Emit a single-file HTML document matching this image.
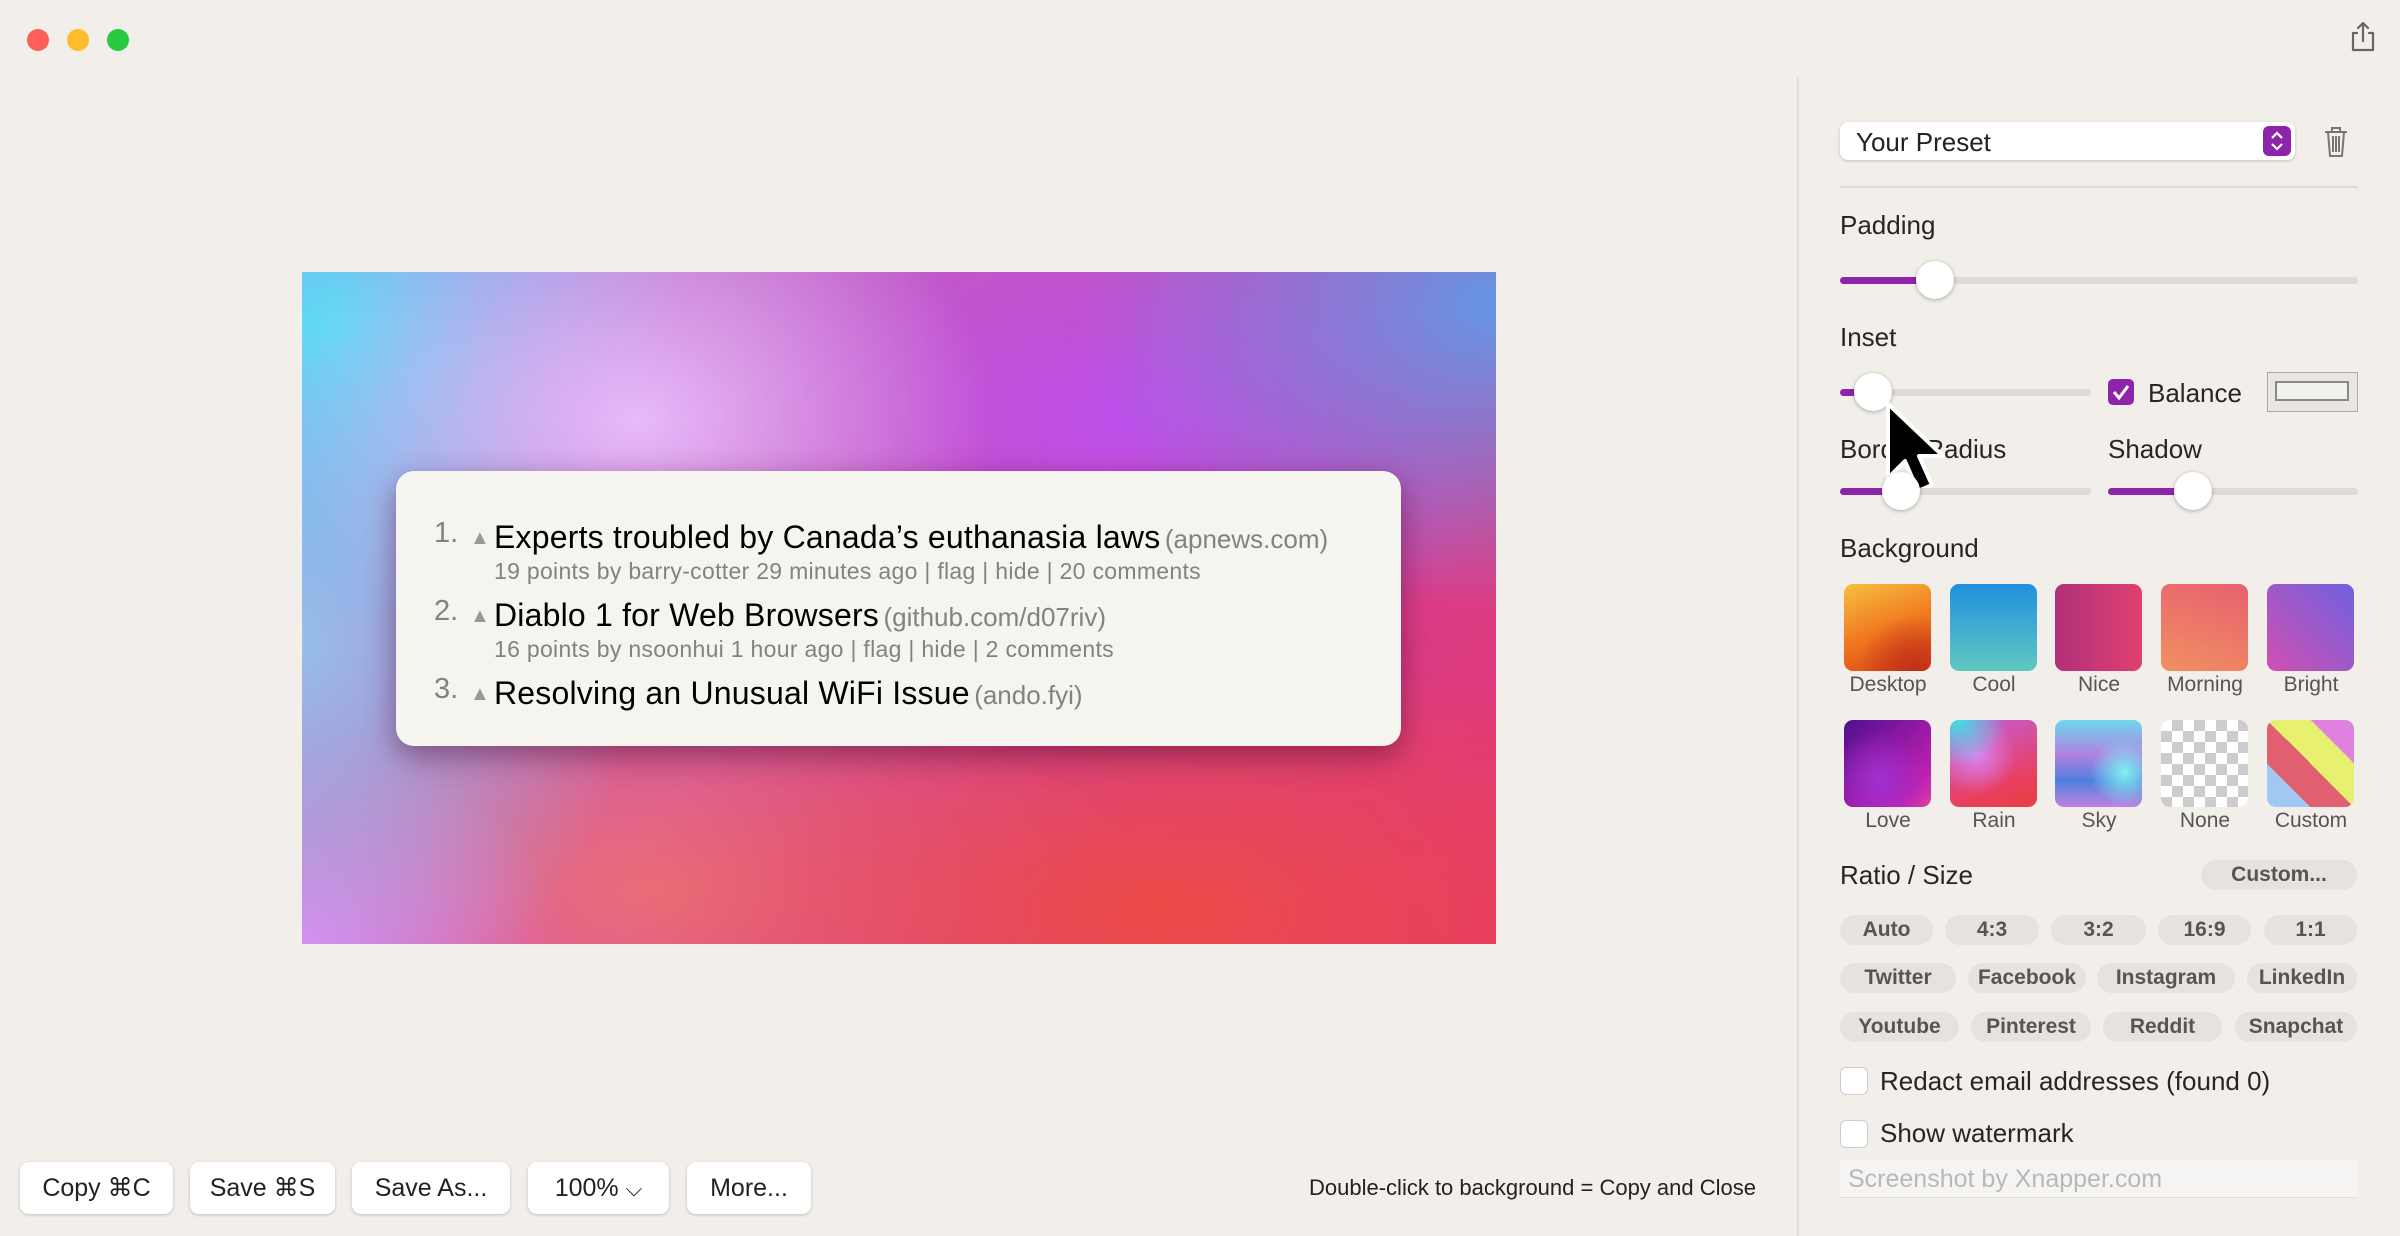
<!DOCTYPE html>
<html><head><meta charset="utf-8">
<style>
*{margin:0;padding:0;box-sizing:border-box}
html,body{width:2400px;height:1236px;overflow:hidden;background:#f2eeea;font-family:"Liberation Sans",sans-serif;color:#222}
.a{position:absolute}
.dot{position:absolute;top:29px;width:22px;height:22px;border-radius:50%}
.lbl{position:absolute;font-size:26px;color:#262626}
.track{position:absolute;height:7px;border-radius:4px;background:#dedad6}
.fill{position:absolute;left:0;top:0;height:7px;border-radius:4px;background:#8e24aa}
.knob{position:absolute;width:38px;height:38px;border-radius:50%;background:#fff;box-shadow:0 1px 4px rgba(0,0,0,.3);top:-16px}
.sw{position:absolute;width:87px;height:87px;border-radius:9px}
.swl{position:absolute;width:104px;text-align:center;font-size:21px;color:#555}
.pill{position:absolute;height:30px;border-radius:15px;background:#e6e2de;font-size:21px;font-weight:bold;color:#555;text-align:center;line-height:30px}
.cb{position:absolute;width:28px;height:28px;border-radius:6px;background:#fff;border:1px solid #ccc}
.btn{position:absolute;top:1162px;height:52px;background:#fff;border-radius:9px;box-shadow:0 1px 3px rgba(0,0,0,.2);font-size:25px;line-height:52px;text-align:center;color:#222}
.t{font-size:32px;color:#000;letter-spacing:0.2px}
.d{font-size:26px;color:#828282}
.s{font-size:23px;color:#828282;letter-spacing:0.3px}
.n{font-size:29px;color:#828282}
.tri{font-size:20px;color:#999}
</style></head><body>
<div class="dot" style="left:27px;background:#fe5f57"></div>
<div class="dot" style="left:67px;background:#febc2e"></div>
<div class="dot" style="left:107px;background:#28c840"></div>
<svg class="a" style="left:2348px;top:20px" width="30" height="34" viewBox="0 0 30 34"><path d="M9 13H5v17h20V13h-4M15 3v18M10 8l5-5 5 5" fill="none" stroke="#666" stroke-width="2.2" stroke-linecap="round" stroke-linejoin="round"/></svg>
<div class="a" style="left:1797px;top:77px;width:2px;height:1159px;background:#e2deda"></div>

<!-- canvas -->
<div class="a" style="left:302px;top:272px;width:1194px;height:672px;overflow:hidden;background:#d94a8a">
<div class="a" style="inset:0;background:
radial-gradient(ellipse 30% 40% at 28% 22%,rgba(232,185,250,1),rgba(232,185,250,0) 100%),
radial-gradient(ellipse 30% 45% at 2% 8%,rgba(90,220,245,1),rgba(90,220,245,0) 100%),
radial-gradient(ellipse 28% 60% at 0% 55%,rgba(150,190,235,1),rgba(150,190,235,0) 100%),
radial-gradient(ellipse 22% 30% at 0% 100%,rgba(230,130,240,1),rgba(230,130,240,0) 100%),
radial-gradient(ellipse 35% 45% at 100% 5%,rgba(100,150,230,1),rgba(100,150,230,0) 100%),
radial-gradient(ellipse 35% 40% at 68% 22%,rgba(190,80,235,1),rgba(190,80,235,0) 100%),
radial-gradient(ellipse 45% 40% at 72% 95%,rgba(235,75,70,1),rgba(235,75,70,0) 100%),
radial-gradient(ellipse 40% 40% at 30% 92%,rgba(235,110,120,1),rgba(235,110,120,0) 100%),
linear-gradient(135deg,#b080e0,#d040a0 60%,#e8386a)"></div>
</div>
<div class="a" style="left:396px;top:471px;width:1005px;height:275px;border-radius:18px;background:#f5f4ee;box-shadow:0 10px 30px rgba(60,0,30,.45)">
 <div class="a n" style="left:38px;top:46px">1.</div><div class="a tri" style="left:74px;top:56px">▲</div>
 <div class="a" style="left:98px;top:48px;white-space:nowrap"><span class="t">Experts troubled by Canada’s euthanasia laws</span> <span class="d">(apnews.com)</span></div>
 <div class="a s" style="left:98px;top:87px;white-space:nowrap">19 points by barry-cotter 29 minutes ago | flag | hide | 20 comments</div>
 <div class="a n" style="left:38px;top:124px">2.</div><div class="a tri" style="left:74px;top:134px">▲</div>
 <div class="a" style="left:98px;top:126px;white-space:nowrap"><span class="t">Diablo 1 for Web Browsers</span> <span class="d">(github.com/d07riv)</span></div>
 <div class="a s" style="left:98px;top:165px;white-space:nowrap">16 points by nsoonhui 1 hour ago | flag | hide | 2 comments</div>
 <div class="a n" style="left:38px;top:202px">3.</div><div class="a tri" style="left:74px;top:212px">▲</div>
 <div class="a" style="left:98px;top:204px;white-space:nowrap"><span class="t">Resolving an Unusual WiFi Issue</span> <span class="d">(ando.fyi)</span></div>
</div>

<!-- bottom -->
<div class="btn" style="left:20px;width:153px">Copy ⌘C</div>
<div class="btn" style="left:190px;width:145px">Save ⌘S</div>
<div class="btn" style="left:352px;width:158px">Save As...</div>
<div class="btn" style="left:528px;width:141px">100% <span style="font-size:22px">⌵</span></div>
<div class="btn" style="left:687px;width:124px">More...</div>
<div class="a" style="left:1200px;width:556px;text-align:right;top:1175px;font-size:22px;color:#222">Double-click to background = Copy and Close</div>

<!-- sidebar -->
<div class="a" style="left:1840px;top:122px;width:455px;height:38px;background:#fff;border-radius:8px;box-shadow:0 1px 3px rgba(0,0,0,.2)">
 <div class="a" style="left:16px;top:5px;font-size:26px">Your Preset</div>
 <div class="a" style="right:4px;top:4px;width:28px;height:30px;border-radius:6px;background:#8e24aa">
  <svg width="28" height="30" viewBox="0 0 28 30"><path d="M9 12l5-5 5 5M9 18l5 5 5-5" fill="none" stroke="#fff" stroke-width="2.2"/></svg></div>
</div>
<svg class="a" style="left:2322px;top:125px" width="28" height="34" viewBox="0 0 28 34"><path d="M3 7h22M10 7V3h8v4M6 7l2 24h12l2-24M11 11v16M14 11v16M17 11v16" fill="none" stroke="#777" stroke-width="2"/></svg>
<div class="a" style="left:1840px;top:186px;width:518px;height:2px;background:#dedad6"></div>

<div class="lbl" style="left:1840px;top:210px">Padding</div>
<div class="track" style="left:1840px;top:277px;width:518px"><div class="fill" style="width:95px"></div><div class="knob" style="left:76px"></div></div>
<div class="lbl" style="left:1840px;top:322px">Inset</div>
<div class="track" style="left:1840px;top:389px;width:251px"><div class="fill" style="width:33px"></div><div class="knob" style="left:14px"></div></div>
<div class="a" style="left:2108px;top:379px;width:26px;height:26px;border-radius:5px;background:#8e24aa"><svg width="26" height="26" viewBox="0 0 26 26"><path d="M6 13l5 6 9-12" fill="none" stroke="#fff" stroke-width="3"/></svg></div>
<div class="lbl" style="left:2148px;top:378px">Balance</div>
<div class="a" style="left:2267px;top:372px;width:91px;height:40px;border:1px solid #aaa;background:#e8e5e2"><div class="a" style="left:7px;top:8px;width:74px;height:20px;border:2px solid #888;background:#f3f1ee"></div></div>
<div class="lbl" style="left:1840px;top:434px">Border Radius</div>
<div class="lbl" style="left:2108px;top:434px">Shadow</div>
<!-- cursor -->
<svg class="a" style="left:1884px;top:400px" width="64" height="96" viewBox="0 0 64 96"><path d="M4 4v74l17-17 13 30 14-6-13-29h24z" fill="#000" stroke="#fff" stroke-width="4" stroke-linejoin="round"/></svg>
<div class="track" style="left:1840px;top:488px;width:251px"><div class="fill" style="width:62px"></div><div class="knob" style="left:42px"></div></div>
<div class="track" style="left:2108px;top:488px;width:250px"><div class="fill" style="width:85px"></div><div class="knob" style="left:66px"></div></div>

<div class="lbl" style="left:1840px;top:533px">Background</div>
<div class="sw" style="left:1844px;top:584px;background:radial-gradient(circle at 80% 100%,#c0301a,transparent 50%),linear-gradient(160deg,#f8c040,#f07a20 50%,#d84010)"></div>
<div class="sw" style="left:1950px;top:584px;background:linear-gradient(180deg,#2090e0,#60c8c0)"></div>
<div class="sw" style="left:2055px;top:584px;background:linear-gradient(90deg,#b0307a,#e04070)"></div>
<div class="sw" style="left:2161px;top:584px;background:linear-gradient(20deg,#f09060,#e86070)"></div>
<div class="sw" style="left:2267px;top:584px;background:linear-gradient(45deg,#d050b0,#7060e0)"></div>
<div class="swl" style="left:1836px;top:673px">Desktop</div><div class="swl" style="left:1942px;top:673px">Cool</div><div class="swl" style="left:2047px;top:673px">Nice</div><div class="swl" style="left:2153px;top:673px">Morning</div><div class="swl" style="left:2259px;top:673px">Bright</div>
<div class="sw" style="left:1844px;top:720px;background:radial-gradient(circle at 40% 70%,#a030d0,transparent 60%),linear-gradient(135deg,#501090,#c020b0 80%,#e040a0)"></div>
<div class="sw" style="left:1950px;top:720px;background:radial-gradient(circle at 10% 0%,#40e0e0,transparent 40%),radial-gradient(circle at 30% 40%,#e080f0,transparent 50%),linear-gradient(160deg,#c060e0,#e84060 70%,#e84040)"></div>
<div class="sw" style="left:2055px;top:720px;background:radial-gradient(circle at 80% 60%,#80f0f0,transparent 40%),linear-gradient(180deg,#70d8f0,#b080e0 40%,#5080e0 70%,#c080e0)"></div>
<div class="sw" style="left:2161px;top:720px;background-color:#fff;background-image:linear-gradient(45deg,#ccc 25%,transparent 25%,transparent 75%,#ccc 75%),linear-gradient(45deg,#ccc 25%,transparent 25%,transparent 75%,#ccc 75%);background-size:22px 22px;background-position:0 0,11px 11px"></div>
<div class="sw" style="left:2267px;top:720px;background:linear-gradient(45deg,#a0c8f0 0 25%,#e06070 25% 50%,#e8f070 50% 75%,#e080e0 75%)"></div>
<div class="swl" style="left:1836px;top:809px">Love</div><div class="swl" style="left:1942px;top:809px">Rain</div><div class="swl" style="left:2047px;top:809px">Sky</div><div class="swl" style="left:2153px;top:809px">None</div><div class="swl" style="left:2259px;top:809px">Custom</div>

<div class="lbl" style="left:1840px;top:860px">Ratio / Size</div>
<div class="pill" style="left:2201px;top:860px;width:156px">Custom...</div>
<div class="pill" style="left:1840px;top:915px;width:93px">Auto</div>
<div class="pill" style="left:1945px;top:915px;width:94px">4:3</div>
<div class="pill" style="left:2051px;top:915px;width:95px">3:2</div>
<div class="pill" style="left:2158px;top:915px;width:93px">16:9</div>
<div class="pill" style="left:2264px;top:915px;width:93px">1:1</div>
<div class="pill" style="left:1840px;top:963px;width:116px">Twitter</div>
<div class="pill" style="left:1968px;top:963px;width:118px">Facebook</div>
<div class="pill" style="left:2097px;top:963px;width:138px">Instagram</div>
<div class="pill" style="left:2247px;top:963px;width:110px">LinkedIn</div>
<div class="pill" style="left:1840px;top:1012px;width:119px">Youtube</div>
<div class="pill" style="left:1971px;top:1012px;width:120px">Pinterest</div>
<div class="pill" style="left:2103px;top:1012px;width:119px">Reddit</div>
<div class="pill" style="left:2235px;top:1012px;width:122px">Snapchat</div>

<div class="cb" style="left:1840px;top:1067px"></div>
<div class="lbl" style="left:1880px;top:1066px">Redact email addresses (found 0)</div>
<div class="cb" style="left:1840px;top:1120px"></div>
<div class="lbl" style="left:1880px;top:1118px">Show watermark</div>
<div class="a" style="left:1840px;top:1160px;width:518px;height:38px;background:#f6f4f2;border-bottom:1px solid #e0dcd8"><div class="a" style="left:8px;top:5px;font-size:25px;color:#b8b8b8">Screenshot by Xnapper.com</div></div>
</body></html>
